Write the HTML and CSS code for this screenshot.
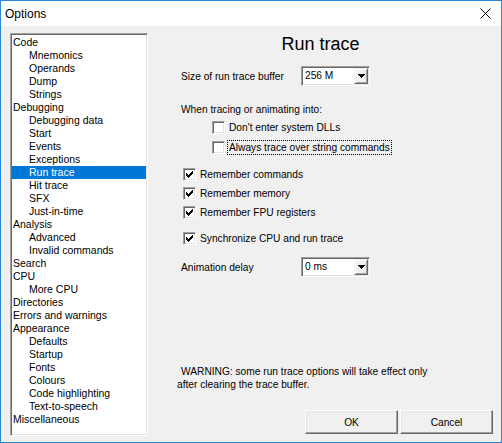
FILE: index.html
```html
<!DOCTYPE html>
<html>
<head>
<meta charset="utf-8">
<title>Options</title>
<link rel="stylesheet" href="styles.css">
</head>
<body>
<div class="window">
  <div class="titlebar">
    <span class="title">Options</span>
    <svg class="close" width="11" height="11" viewBox="0 0 11 11"><path d="M0.5 0.5L10.5 10.5M10.5 0.5L0.5 10.5" stroke="#000" stroke-width="1" fill="none"/></svg>
  </div>
  <div class="client">
    <ul class="tree">
      <li class="top">Code</li>
      <li class="sub">Mnemonics</li>
      <li class="sub">Operands</li>
      <li class="sub">Dump</li>
      <li class="sub">Strings</li>
      <li class="top">Debugging</li>
      <li class="sub">Debugging data</li>
      <li class="sub">Start</li>
      <li class="sub">Events</li>
      <li class="sub">Exceptions</li>
      <li class="sub selected">Run trace</li>
      <li class="sub">Hit trace</li>
      <li class="sub">SFX</li>
      <li class="sub">Just-in-time</li>
      <li class="top">Analysis</li>
      <li class="sub">Advanced</li>
      <li class="sub">Invalid commands</li>
      <li class="top">Search</li>
      <li class="top">CPU</li>
      <li class="sub">More CPU</li>
      <li class="top">Directories</li>
      <li class="top">Errors and warnings</li>
      <li class="top">Appearance</li>
      <li class="sub">Defaults</li>
      <li class="sub">Startup</li>
      <li class="sub">Fonts</li>
      <li class="sub">Colours</li>
      <li class="sub">Code highlighting</li>
      <li class="sub">Text-to-speech</li>
      <li class="top">Miscellaneous</li>
    </ul>
    <div class="panel">
      <h1 class="heading">Run trace</h1>
      <div class="form">
        <div class="field first">
          <span class="label">Size of run trace buffer</span>
          <div class="combo"><span class="value">256 M</span><span class="drop"><svg width="7" height="4" viewBox="0 0 7 4"><path d="M0 0h7v1h-1v1h-1v1h-1v1h-1v-1h-1v-1h-1v-1h-1z" fill="#000"/></svg></span></div>
        </div>
        <div class="note">When tracing or animating into:</div>
        <div class="checks indented">
          <div class="check"><span class="cb"></span><span class="cl">Don't enter system DLLs</span></div>
          <div class="check"><span class="cb"></span><span class="cl focus">Always trace over string commands</span></div>
        </div>
        <div class="checks group">
          <div class="check tight"><span class="cb"><svg width="13" height="13" viewBox="0 0 13 13" shape-rendering="crispEdges"><path d="M3 5h1v3H3z M4 6h1v3H4z M5 7h1v3H5z M6 6h1v3H6z M7 5h1v3H7z M8 4h1v3H8z M9 3h1v3H9z" fill="#000"/></svg></span><span class="cl">Remember commands</span></div>
          <div class="check tight"><span class="cb"><svg width="13" height="13" viewBox="0 0 13 13" shape-rendering="crispEdges"><path d="M3 5h1v3H3z M4 6h1v3H4z M5 7h1v3H5z M6 6h1v3H6z M7 5h1v3H7z M8 4h1v3H8z M9 3h1v3H9z" fill="#000"/></svg></span><span class="cl">Remember memory</span></div>
          <div class="check tight"><span class="cb"><svg width="13" height="13" viewBox="0 0 13 13" shape-rendering="crispEdges"><path d="M3 5h1v3H3z M4 6h1v3H4z M5 7h1v3H5z M6 6h1v3H6z M7 5h1v3H7z M8 4h1v3H8z M9 3h1v3H9z" fill="#000"/></svg></span><span class="cl">Remember FPU registers</span></div>
        </div>
        <div class="checks sync">
          <div class="check tight"><span class="cb"><svg width="13" height="13" viewBox="0 0 13 13" shape-rendering="crispEdges"><path d="M3 5h1v3H3z M4 6h1v3H4z M5 7h1v3H5z M6 6h1v3H6z M7 5h1v3H7z M8 4h1v3H8z M9 3h1v3H9z" fill="#000"/></svg></span><span class="cl">Synchronize CPU and run trace</span></div>
        </div>
        <div class="field anim">
          <span class="label">Animation delay</span>
          <div class="combo"><span class="value">0 ms</span><span class="drop"><svg width="7" height="4" viewBox="0 0 7 4"><path d="M0 0h7v1h-1v1h-1v1h-1v1h-1v-1h-1v-1h-1v-1h-1z" fill="#000"/></svg></span></div>
        </div>
      </div>
      <div class="bottom">
        <p class="warning"><span class="w1">WARNING: some run trace options will take effect only</span><br>after clearing the trace buffer.</p>
        <div class="buttons">
          <button class="btn">OK</button>
          <button class="btn">Cancel</button>
        </div>
      </div>
    </div>
  </div>
</div>
</body>
</html>
```

FILE: styles.css
```css
html, body {
  margin: 0;
  padding: 0;
}
body {
  width: 502px;
  height: 443px;
  overflow: hidden;
  font-family: "Liberation Sans", Arial, sans-serif;
  color: #000;
  background: #f0f0f0;
}
.window {
  box-sizing: border-box;
  width: 502px;
  height: 443px;
  border: 1px solid #2b88d8;
  background: #f0f0f0;
  display: flex;
  flex-direction: column;
}
.titlebar {
  flex: none;
  height: 25px;
  background: #fff;
  display: flex;
  align-items: center;
  padding: 0 10px 0 4px;
}
.title {
  flex: 1;
  font-size: 12px;
  line-height: 14px;
}
.close {
  display: block;
}
.client {
  flex: 1;
  display: flex;
  min-height: 0;
}
.tree {
  flex: none;
  list-style: none;
  margin: 7px 0 0 9px;
  padding: 2px 1px 0 1px;
  width: 138px;
  height: 403px;
  box-sizing: border-box;
  background: #fff;
  border: 1px solid;
  border-color: #a0a0a0 #fff #fff #a0a0a0;
  box-shadow: inset 1px 1px #696969, inset -1px -1px #e3e3e3;
  overflow: hidden;
}
.tree li {
  height: 13px;
  line-height: 13px;
  font-size: 10.5px;
  white-space: nowrap;
  padding-left: 1px;
}
.tree li.sub {
  padding-left: 17px;
}
.tree li.selected {
  background: #0078d7;
  color: #fff;
}
.panel {
  flex: 1;
  display: flex;
  flex-direction: column;
  padding: 0 8px 8px 0;
  min-width: 0;
}
.heading {
  margin: 8px 0 0 0;
  font-size: 18px;
  font-weight: normal;
  line-height: 21px;
  text-align: center;
}
.form {
  padding-left: 33px;
  font-size: 10.2px;
}
.field {
  display: flex;
  align-items: center;
  height: 20px;
}
.field.first {
  margin-top: 11px;
}
.field.anim {
  margin-top: 9px;
}
.label {
  width: 120px;
  line-height: 13px;
  white-space: nowrap;
}
.combo {
  box-sizing: border-box;
  width: 69px;
  height: 20px;
  display: flex;
  align-items: stretch;
  background: #fff;
  border: 1px solid;
  border-color: #a0a0a0 #fff #fff #a0a0a0;
  box-shadow: inset 1px 1px #696969, inset -1px -1px #e3e3e3;
  padding: 1px;
}
.value {
  flex: 1;
  padding-left: 2px;
  line-height: 16px;
  white-space: nowrap;
}
.drop {
  box-sizing: border-box;
  width: 14px;
  display: flex;
  align-items: center;
  justify-content: center;
  background: #f0f0f0;
  border: 1px solid;
  border-color: #f0f0f0 #696969 #696969 #f0f0f0;
  box-shadow: inset 1px 1px #fff, inset -1px -1px #a0a0a0;
}
.drop svg {
  display: block;
}
.note {
  margin-top: 17px;
  line-height: 13px;
  white-space: nowrap;
}
.checks.indented {
  margin-top: 1px;
  padding-left: 31px;
}
.checks.group {
  margin-top: 8px;
  padding-left: 2px;
}
.checks.sync {
  margin-top: 7px;
  padding-left: 2px;
}
.check {
  height: 20px;
  display: flex;
  align-items: center;
}
.check.tight {
  height: 19px;
}
.cb {
  box-sizing: border-box;
  width: 13px;
  height: 13px;
  flex: none;
  margin-right: 3px;
  background: #fff;
  border: 1px solid;
  border-color: #a0a0a0 #fff #fff #a0a0a0;
  box-shadow: inset 1px 1px #696969, inset -1px -1px #e3e3e3;
  position: relative;
}
.cb svg {
  position: absolute;
  left: -1px;
  top: -1px;
  display: block;
}
.cl {
  display: inline-block;
  line-height: 13px;
  padding: 0 1px;
  white-space: nowrap;
}
.cl.focus {
  outline: 1px dotted #000;
}
.bottom {
  margin-top: auto;
  font-size: 10.2px;
}
.warning {
  margin: 0 0 19px 29px;
  line-height: 13px;
  white-space: nowrap;
}
.w1 {
  padding-left: 4px;
}
.buttons {
  display: flex;
  justify-content: flex-end;
  gap: 2px;
}
.btn {
  box-sizing: border-box;
  width: 93px;
  height: 24px;
  font-family: "Liberation Sans", Arial, sans-serif;
  font-size: 10.2px;
  color: #000;
  background: #f0f0f0;
  border: 1px solid;
  border-color: #fff #696969 #696969 #fff;
  box-shadow: inset -1px -1px #a0a0a0, inset 1px 1px #e3e3e3;
  padding: 0;
  margin: 0;
}
```
